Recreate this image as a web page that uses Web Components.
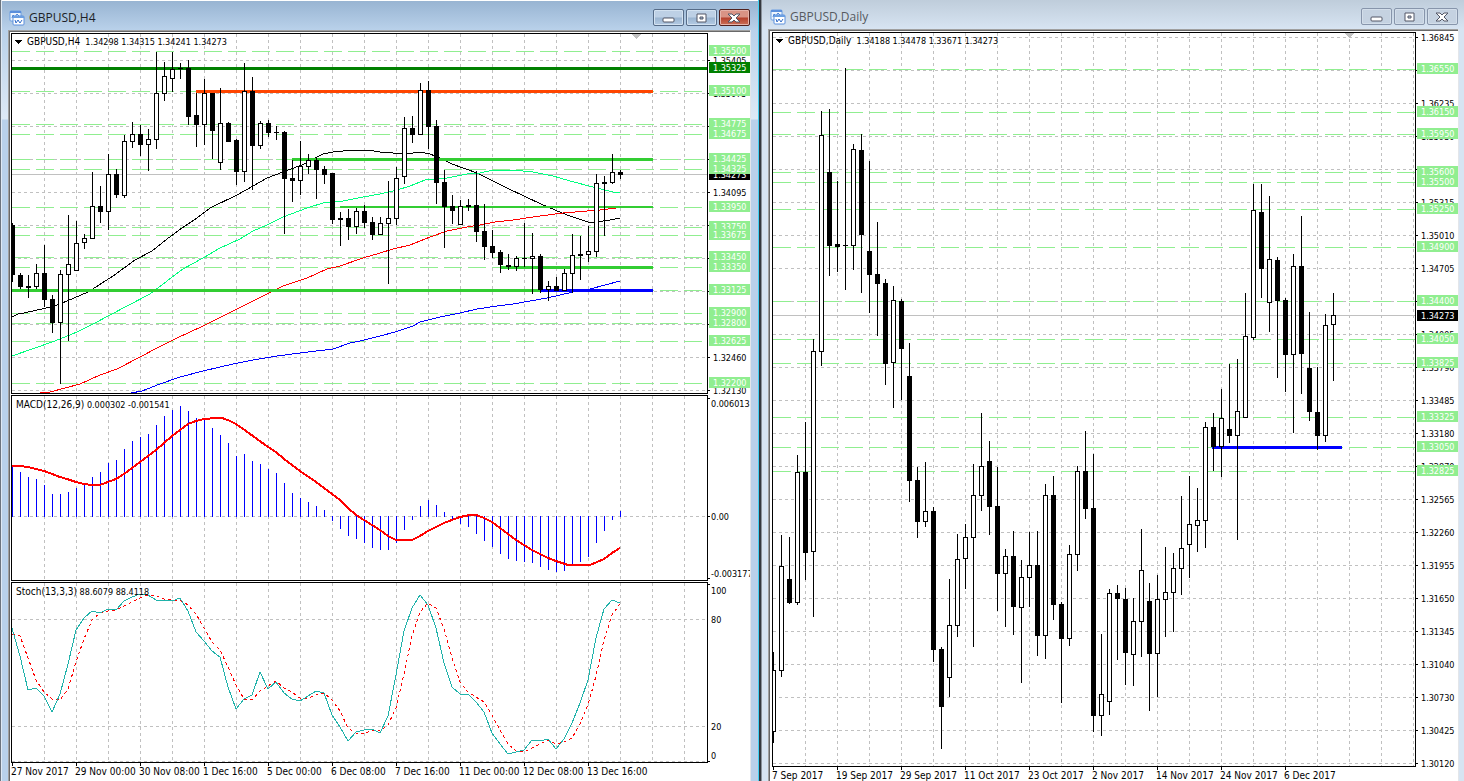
<!DOCTYPE html>
<html lang="en">
<head>
<meta charset="utf-8">
<title>GBPUSD charts</title>
<style>
  body {
    margin: 0;
    background: #ababab;
    font-family: "DejaVu Sans Condensed", "Noto Sans", sans-serif;
    font-size: 10px;
  }
</style>
</head>
<body>
<chart-desktop>
  <chart-window caption="GBPUSD,H4" active>
    <chart-pane id="h4-price" class="grow"></chart-pane>
    <chart-pane id="h4-macd" style="--pane-height: 186px"></chart-pane>
    <chart-pane id="h4-stoch" style="--pane-height: 181px"></chart-pane>
    <time-scale labels="27 Nov 2017|29 Nov 00:00|30 Nov 08:00|1 Dec 16:00|5 Dec 00:00|6 Dec 08:00|7 Dec 16:00|11 Dec 00:00|12 Dec 08:00|13 Dec 16:00" style="--scale-height: 18px"></time-scale>
  </chart-window>
  <chart-window caption="GBPUSD,Daily">
    <chart-pane id="daily-price" class="grow"></chart-pane>
    <time-scale labels="7 Sep 2017|19 Sep 2017|29 Sep 2017|11 Oct 2017|23 Oct 2017|2 Nov 2017|14 Nov 2017|24 Nov 2017|6 Dec 2017" style="--scale-height: 14px"></time-scale>
  </chart-window>
</chart-desktop>

<script>
(function (customElements) {
  const BAR_STEP = 8;
  const GRID_STEP = 32;
  const FAR = 4000;
  const LIGHT = '#90ee90';

  // each bar: high, body top, body bottom, low, 1 = rising (hollow) / 0 = falling (filled)
  const H4_BARS = [
    [223,225,275,282,0],[273,275,287,289,0],[275,286,288,298,0],[264,273,287,289,1],[245,273,300,307,0],
    [295,299,323,333,0],[270,274,323,384,1],[215,264,275,341,1],[221,243,271,271,1],[234,238,243,249,1],
    [172,206,239,239,1],[186,206,212,223,0],[154,174,212,230,1],[169,174,195,198,0],[135,141,196,198,1],
    [122,134,142,148,1],[125,134,145,156,0],[129,139,145,171,1],[52,93,140,149,1],[62,76,94,101,1],
    [52,69,79,92,1],[63,68,69,79,0],[60,68,117,125,0],[93,115,125,147,0],[79,93,125,145,1],
    [93,93,131,159,0],[88,123,163,170,1],[122,123,142,142,0],[139,140,172,185,0],[63,91,172,182,1],
    [77,91,146,190,0],[121,123,146,149,1],[120,123,133,137,0],[126,132,133,140,0],[131,132,179,234,0],
    [160,178,181,202,0],[141,166,181,195,1],[154,160,167,174,1],[158,160,170,199,0],[166,169,175,184,0],
    [173,173,220,224,0],[212,218,220,246,0],[209,218,227,240,0],[208,211,227,234,1],[205,211,223,228,0],
    [217,222,235,240,0],[217,223,235,235,1],[181,218,224,284,1],[167,178,219,225,1],[117,128,177,184,1],
    [116,128,135,143,0],[83,90,135,135,1],[81,90,127,149,0],[120,126,183,204,0],[170,182,207,248,0],
    [195,206,211,224,0],[200,206,225,225,1],[199,205,207,211,0],[171,205,232,242,0],[204,231,247,260,0],
    [230,246,253,258,0],[250,252,265,273,0],[254,265,267,270,0],[256,258,267,271,1],[223,258,259,267,0],
    [233,256,259,294,1],[254,256,290,293,0],[281,286,290,301,1],[277,286,291,291,0],[269,273,291,291,1],
    [234,255,274,293,1],[236,254,256,280,0],[226,251,255,262,1],[174,183,252,257,1],[176,182,184,236,0],
    [154,172,183,184,1],[170,172,175,179,0]
  ];

  const DAILY_BARS = [
    [652,670,732,743,1],[535,566,671,677,1],[537,579,603,604,0],[455,472,603,605,1],[422,472,553,580,0],
    [339,351,552,617,1],[111,135,352,366,1],[109,172,246,276,0],[181,244,247,272,0],[68,245,246,290,0],
    [144,149,246,270,1],[134,150,235,293,0],[161,251,275,313,0],[222,274,284,336,0],[279,283,364,385,0],
    [286,300,363,408,1],[299,301,349,400,0],[343,376,481,502,0],[467,480,522,538,0],[462,511,522,527,1],
    [507,511,650,662,0],[647,649,707,749,0],[579,625,678,697,1],[534,559,626,637,1],[524,537,559,589,1],
    [464,495,538,647,1],[413,466,496,511,1],[441,461,507,535,0],[467,506,574,611,0],[549,556,574,627,1],
    [531,556,607,635,0],[560,577,608,683,1],[532,565,578,607,1],[531,565,636,656,0],[484,495,636,659,1],
    [476,495,605,620,0],[602,604,639,703,0],[545,554,639,646,1],[466,471,555,571,1],[431,471,509,519,0],
    [454,508,716,732,0],[634,694,716,736,1],[589,593,702,715,1],[585,593,599,660,0],[588,599,653,685,0],
    [598,621,655,686,1],[529,570,622,657,1],[583,601,654,711,0],[575,599,654,697,1],[547,592,600,637,1],
    [553,568,593,632,1],[496,548,569,595,1],[476,524,545,578,1],[488,520,526,552,1],[422,427,521,548,1],
    [413,427,447,471,0],[389,418,447,477,1],[364,429,436,443,0],[359,411,436,540,1],[293,336,418,418,1],
    [184,210,338,340,1],[184,212,269,298,0],[196,259,303,332,1],[257,260,301,378,0],[298,300,355,392,0],
    [254,266,355,433,1],[216,266,354,394,0],[312,368,412,421,0],[367,412,436,450,0],[314,325,436,442,1],
    [293,315,325,381,1]
  ];

  const MACD = [466,472,477,479,485,494,494,492,488,485,477,472,463,460,449,441,437,434,425,416,410,406,411,418,
    419,428,435,443,456,454,461,464,469,473,483,493,498,502,506,510,520,528,535,538,542,547,549,549,542,529,519,
    506,500,505,512,518,523,526,533,540,546,553,558,560,561,562,566,569,571,570,564,561,556,542,530,519,511];

  const STOCH_MAIN = [628,656,690,688,696,712,694,664,630,618,611,613,609,610,601,597,594,595,600,600,601,598,611,
    632,641,651,657,687,709,699,695,672,689,682,693,699,701,696,691,693,715,727,741,732,730,729,733,716,675,631,
    608,595,605,628,663,687,694,694,702,712,733,744,754,752,750,740,741,739,749,739,723,703,680,638,609,600,603];

  const STOCH_SIGNAL = [634,636,658,680,692,699,700,689,662,639,620,613,611,610,606,602,598,595,596,599,600,600,605,
    614,628,642,650,667,685,699,700,691,686,681,688,692,698,698,695,693,700,711,728,733,734,730,731,725,708,674,
    636,612,603,608,629,658,682,692,697,702,715,730,744,751,752,748,744,740,744,742,738,724,705,676,640,615,604];

  const PANES = {
    'h4-price': {
      left: 12, top: 34, firstGrid: 44,
      title: ['GBPUSD,H4', '1.34298 1.34315 1.34241 1.34273'],
      rows: [60, 93, 126, 159, 192, 225, 258, 291, 324, 357, 390],
      bid: 174, shift: 636,
      lines: [
        ['#000', '12,317 18,314 24,313 55,306 67,301 88,292 113,276 135,260 152,251 167,239 182,228 197,218 210,208 237,195 253,186 267,178 283,172 307,163 317,157 323,154 333,152 353,150 367,150 380,152 393,153 407,154 420,152 430,154 440,158 452,164 477,173 507,188 543,205 567,215 588,222 597,222 610,220 620,218'],
        ['#00ff7f', '12,356 55,341 77,332 93,324 110,315 127,306 150,294 167,281 183,269 203,258 220,248 240,239 253,231 267,225 283,217 307,208 323,203 343,201 363,197 380,194 397,190 410,186 425,180 447,178 467,174 480,173 493,170 513,170 533,172 553,176 570,181 593,187 613,192 620,193'],
        ['#f00', '40,393 50,392 80,384 100,375 117,369 140,357 157,348 177,338 203,326 233,311 253,301 267,294 283,286 307,278 327,269 340,266 363,258 380,253 393,249 410,245 430,237 447,231 467,227 480,225 495,222 513,220 540,216 563,213 587,211 600,210 616,208'],
        ['#00f', '131,393 142,391 160,384 180,377 203,371 233,364 253,360 277,356 300,353 333,349 350,343 360,341 380,336 395,332 413,326 420,322 440,317 460,313 477,309 497,306 513,304 547,298 573,292 590,289 620,281']
      ],
      // x from, x to, top, thickness, colour
      zones: [
        [12, FAR, 67, 3, '#008000'], [196, 653, 90, 3, '#ff4500'], [292, 653, 158, 3, '#32cd32'],
        [340, 653, 206, 2, '#32cd32'], [500, 653, 266, 3, '#32cd32'], [12, 541, 289, 3, '#32cd32'],
        [541, 653, 289, 3, '#00f']
      ],
      bars: H4_BARS,
      axis: [[60, '1.35405'], [93, '1.35075'], [126], [159], [192, '1.34095'], [225], [258], [291], [324], [357, '1.32460'], [390, '1.32130']],
      tags: [
        [175, '1.34273', '#000'], [51, '1.35500'], [68, '1.35325', '#008000'], [91, '1.35100'], [124, '1.34775'],
        [134, '1.34675'], [159, '1.34425'], [169, '1.34325'], [207, '1.33950'], [227, '1.33750'], [235, '1.33675'],
        [257, '1.33450'], [267, '1.33350'], [290, '1.33125'], [313, '1.32900'], [323, '1.32800'], [341, '1.32625'],
        [383, '1.32200']
      ]
    },
    'h4-macd': {
      left: 12, top: 396, firstGrid: 44,
      caption: ['MACD(12,26,9)', '0.000302 -0.001541'],
      rows: [516],
      histogram: MACD,
      lines: [
        ['#f00', '12,466 20,466 28,467 44,471 60,477 70,480 76,482 84,484 92,485 100,485 108,482 116,479 124,474 132,468 140,462 156,450 172,436 188,424 196,421 204,419 216,418 222,418 230,421 236,424 246,431 268,447 276,452 284,459 300,471 316,482 332,494 340,500 348,508 356,515 364,520 380,530 388,536 396,540 412,540 420,536 428,531 444,523 460,517 470,515 476,515 484,518 492,522 500,528 516,540 524,545 532,550 540,554 548,558 556,561 568,565 590,565 604,559 612,553 620,548', 2]
      ],
      axis: [[403, '0.006013', 3], [516, '0.00', 3], [573, '-0.003177', 3]],
      ticks: [398, 516, 578]
    },
    'h4-stoch': {
      left: 12, top: 583, firstGrid: 44,
      caption: ['Stoch(13,3,3)', '88.6079 88.4118'],
      rows: [619, 726, 761],
      lines: [['#f00', STOCH_SIGNAL, 1, '3 3'], ['#20b2aa', STOCH_MAIN]],
      axis: [[590, '100', 3], [619, '80', 3], [726, '20', 3], [755, '0', 3]],
      ticks: [584, 761]
    },
    'daily-price': {
      left: 773, top: 33, firstGrid: 805,
      title: ['GBPUSD,Daily', '1.34188 1.34478 1.33671 1.34273'],
      rows: Array.from({ length: 23 }, (_, i) => 37 + i * 33),
      bid: 315, shift: 1349,
      zones: [[1212, 1342, 446, 3, '#00f']],
      bars: DAILY_BARS,
      axis: [
        [37, '1.36845'], [70], [103, '1.36235'], [136, '1.35930'], [169], [202, '1.35315'], [235, '1.35010'],
        [268, '1.34705'], [301], [334, '1.34095'], [367, '1.33790'], [400, '1.33485'], [433, '1.33180'],
        [466, '1.32870'], [499, '1.32565'], [532, '1.32260'], [565, '1.31955'], [598, '1.31650'], [631, '1.31345'],
        [664, '1.31040'], [697, '1.30730'], [730, '1.30425'], [763, '1.30120']
      ],
      tags: [
        [69, '1.36550'], [112, '1.36150'], [134, '1.35950'], [172, '1.35600'], [182, '1.35500'], [209, '1.35250'],
        [247, '1.34900'], [301, '1.34400'], [316, '1.34273', '#000'], [339, '1.34050'], [363, '1.33825'],
        [417, '1.33325'], [447, '1.33050'], [471, '1.32825']
      ]
    }
  };

  const rect = (x, y, w, h, fill) => `<rect x="${x}" y="${y}" width="${w}" height="${h}" fill="${fill}"/>`;

  const drawBar = (bar, x) => {
    const [high, top, bottom, low, rising] = bar;
    return rect(x, high, 1, low - high, '#000')
      + rect(x - 2, top, 5, bottom - top, '#000')
      + (rising ? rect(x - 1, top + 1, 3, bottom - top - 2, '#fff') : '');
  };

  const drawLine = (left, [colour, points, width = 1, dash = 'none']) => {
    const list = Array.isArray(points) ? points.map((y, i) => `${left + i * BAR_STEP},${y}`).join(' ') : points;
    return `<polyline points="${list}" fill="none" stroke="${colour}" stroke-width="${width}" stroke-dasharray="${dash}"/>`;
  };

  class ChartDesktop extends HTMLElement {
    connectedCallback() {
      this.attachShadow({ mode: 'open' }).innerHTML = `
        <style>
          :host {
            display: grid;
            grid-template-columns: 761fr 703fr;
            height: 100vh;
            min-height: 560px;
            overflow: hidden;
          }
        </style>
        <slot></slot>`;
    }
  }

  class WindowButton extends HTMLElement {
    connectedCallback() {
      const glyphs = {
        minimize: '<rect x="10" y="8" width="11" height="4" rx="1" fill="#fff" stroke="#535666"/>',
        restore: '<path d="M11 4h9v8h-9zM14 7h3v2h-3z" fill="#fff" fill-rule="evenodd" stroke="#535666"/>',
        close: '<path d="M10 4h4l2 2 2-2h4l-4 4 4 4h-4l-2-2-2 2h-4l4-4z" transform="translate(-1 0)" fill="#fff" stroke="#535666"/>'
      };
      const kind = this.getAttribute('kind');
      this.attachShadow({ mode: 'open' }).innerHTML = `
        <style>
          :host { display: block; }
          button {
            display: block;
            box-sizing: border-box;
            width: 31px;
            height: 17px;
            padding: 0;
            border: 1px solid #8795ab;
            border-radius: 2px;
            background: #c5d2e1;
            box-shadow: inset 0 0 0 1px #d3deea;
          }
          :host([active]) button {
            border-color: #566c88;
            background: linear-gradient(#bdd0e5 48%, #9ab4d0 52%, #b4cbe4);
            box-shadow: inset 0 0 0 1px #d3e2f1;
          }
          :host([active][kind="close"]) button {
            border-color: #50201d;
            background: linear-gradient(#d99385 48%, #b5402c 52%, #cb7058);
            box-shadow: inset 0 0 0 1px #e5b3aa;
          }
          svg { display: block; width: 29px; height: 15px; }
        </style>
        <button type="button" aria-label="${kind}"><svg viewBox="1 0 29 15">${glyphs[kind]}</svg></button>`;
    }
  }

  class ChartWindow extends HTMLElement {
    connectedCallback() {
      const active = this.hasAttribute('active') ? 'active' : '';
      this.attachShadow({ mode: 'open' }).innerHTML = `
        <style>
          :host {
            display: flex;
            flex-direction: column;
            box-sizing: border-box;
            min-width: 0;
            min-height: 0;
            padding: 0 5px 0 6px;
            border-left: 1px solid #8a929b;
            background: linear-gradient(#bfcddb, #d7e4f2 29px);
          }
          :host([active]) {
            padding: 1px 7px 0;
            border-left: 1px solid #6c747e;
            border-right: 2px solid #34383e;
            box-shadow: inset -1px 0 #42d2f4, inset 1px 0 #dfe9f4;
            background: linear-gradient(#fff 1px, #98b4d2 1px, #b9d1ea 30px, #dde9f6 119px, #b9d1ea 120px);
          }
          header {
            display: flex;
            align-items: center;
            gap: 2px;
            height: 29px;
            padding: 4px 1px 0 2px;
            box-sizing: border-box;
            color: #565a60;
          }
          :host([active]) header { color: #1c1f26; padding: 4px 2px 0 1px; }
          h2 {
            flex: 1;
            margin: 0;
            padding-left: 2px;
            font: 12px/16px "Open Sans", "Noto Sans", sans-serif;
          }
          .icon { width: 16px; height: 16px; }
          .client {
            display: flex;
            flex: 1;
            flex-direction: column;
            gap: 1px;
            min-height: 0;
            padding: 2px 0 0 2px;
            border: solid #a0a0a0;
            border-width: 1px 0 0 1px;
            background: #fff;
            box-shadow: inset 1px 1px #696969, 1px 0 #e3e6ea;
          }
          :host([active]) .client { margin-right: 2px; }
          :host(:not([active])) .client { margin-right: 1px; padding-left: 3px; }
          ::slotted(.grow) { flex: 1; }
        </style>
        <header>
          <svg class="icon" viewBox="0 0 16 16" aria-hidden="true">
            <rect x="1" y="1" width="11" height="10" rx="1" fill="#eef5fd" stroke="#6b9fe2"/>
            <path d="M1 2h11" stroke="#5b8fdc" stroke-width="2"/>
            <path d="M3 8l1-3 2 2 2-3 2 2" fill="none" stroke="#4b83d6"/>
            <rect x="4" y="6" width="11" height="9" rx="1" fill="#fff" stroke="#5b8fdc"/>
            <path d="M4 7h11" stroke="#6b9fe2" stroke-width="2"/>
            <path d="M6 10l1 3 2-3 2 3 2-3" fill="none" stroke="#2f6bc8"/>
          </svg>
          <h2>${this.getAttribute('caption')}</h2>
          <window-button kind="minimize" ${active}></window-button>
          <window-button kind="restore" ${active}></window-button>
          <window-button kind="close" ${active}></window-button>
        </header>
        <div class="client"><slot></slot></div>`;
    }
  }

  class ChartPane extends HTMLElement {
    connectedCallback() {
      const pane = PANES[this.id];
      this.attachShadow({ mode: 'open' }).innerHTML = `
        <style>
          :host {
            display: grid;
            grid-template-columns: minmax(0, 1fr) 42px;
            flex: none;
            height: var(--pane-height, auto);
            min-height: 0;
          }
          svg {
            display: block;
            box-sizing: border-box;
            width: 100%;
            height: 100%;
            min-height: 0;
            contain: size;
            overflow: hidden;
            shape-rendering: crispEdges;
          }
          .plot { border: 1px solid #000; }
          text { font-size: 9px; fill: #000; white-space: pre; }
          .name { font-size: 10px; }
          .tag { fill: #fff; }
        </style>
        <svg class="plot" role="img" aria-label="${this.id}">
          <defs>
            <pattern id="row" width="6" height="1" patternUnits="userSpaceOnUse">${rect(0, 0, 3, 1, '#c0c0c0')}</pattern>
            <pattern id="column" width="1" height="6" patternUnits="userSpaceOnUse">${rect(0, 0, 1, 3, '#c0c0c0')}</pattern>
            <pattern id="level" width="24" height="1" patternUnits="userSpaceOnUse">${rect(0, 0, 18, 1, LIGHT)}</pattern>
          </defs>
          ${this.drawPlot(pane)}
        </svg>
        <svg class="scale">${this.drawScale(pane)}</svg>`;
    }

    drawPlot(pane) {
      const { left, top } = pane;
      const out = [];
      for (let x = pane.firstGrid - left; x < FAR; x += GRID_STEP) {
        out.push(rect(x, 0, 1, FAR, 'url(#column)'));
      }
      pane.rows.forEach((y) => out.push(rect(0, y - top, FAR, 1, 'url(#row)')));
      (pane.tags || []).filter((tag) => !tag[2]).forEach(([y]) => out.push(rect(0, y - top, FAR, 1, 'url(#level)')));
      if (pane.bid) {
        out.push(rect(0, pane.bid - top, FAR, 1, '#c0c0c0'));
      }

      // series keep the coordinates of the terminal's desktop
      out.push(`<g transform="translate(${-left} ${-top})">`);
      (pane.histogram || []).forEach((y, i) => {
        out.push(rect(left + i * BAR_STEP, Math.min(y, 516), 1, Math.abs(y - 516) + 1, '#00f'));
      });
      (pane.lines || []).forEach((line) => out.push(drawLine(left, line)));
      (pane.zones || []).forEach(([from, to, y, h, colour]) => out.push(rect(from, y, to - from, h, colour)));
      (pane.bars || []).forEach((bar, i) => out.push(drawBar(bar, left + i * BAR_STEP)));
      if (pane.shift) {
        out.push(`<path d="M${pane.shift - 4} ${top}h9l-4 5h-1z" fill="#c0c0c0"/>`);
      }
      out.push('</g>');

      if (pane.title) {
        const [symbol, prices] = pane.title;
        out.push('<path d="M3 6h7l-3 4h-1z"/>');
        out.push(`<text x="15" y="11"><tspan class="name">${symbol}</tspan>  ${prices}</text>`);
      } else {
        const [name, values] = pane.caption;
        out.push(`<text x="4" y="12"><tspan class="name">${name}</tspan> ${values}</text>`);
      }
      return out.join('');
    }

    drawScale(pane) {
      // one pixel of frame lies above the plot's own origin
      const at = (y) => y - pane.top + 1;
      const ticks = pane.ticks || pane.axis.map(([y]) => y);
      const out = ticks.map((y) => rect(0, at(y), 2, 1, '#000'));
      pane.axis.filter((mark) => mark[1]).forEach(([y, label, x = 5]) => {
        out.push(`<text x="${x}" y="${at(y) + 4}">${label}</text>`);
      });
      (pane.tags || []).forEach(([y, label, fill = LIGHT]) => {
        out.push(rect(1, at(y) - 6, 41, 11, fill));
        out.push(`<text class="tag" x="5" y="${at(y) + 3}">${label}</text>`);
      });
      return out.join('');
    }
  }

  class TimeScale extends HTMLElement {
    connectedCallback() {
      const labels = this.getAttribute('labels').split('|');
      this.attachShadow({ mode: 'open' }).innerHTML = `
        <style>
          :host {
            display: block;
            flex: none;
            height: var(--scale-height);
            margin-top: -1px;
            overflow: hidden;
          }
          ol {
            display: grid;
            grid-auto-flow: column;
            grid-auto-columns: 64px;
            margin: 0;
            padding: 0 0 0 1px;
            list-style: none;
          }
          li { line-height: 12px; white-space: nowrap; }
          li::before { content: ""; display: block; width: 1px; height: 3px; background: #000; }
          span { margin-left: -1px; }
        </style>
        <ol>${labels.map((label) => `<li><span>${label}</span></li>`).join('')}</ol>`;
    }
  }

  customElements.define('chart-desktop', ChartDesktop);
  customElements.define('window-button', WindowButton);
  customElements.define('chart-window', ChartWindow);
  customElements.define('chart-pane', ChartPane);
  customElements.define('time-scale', TimeScale);
})(window.customElements);
</script>
</body>
</html>
